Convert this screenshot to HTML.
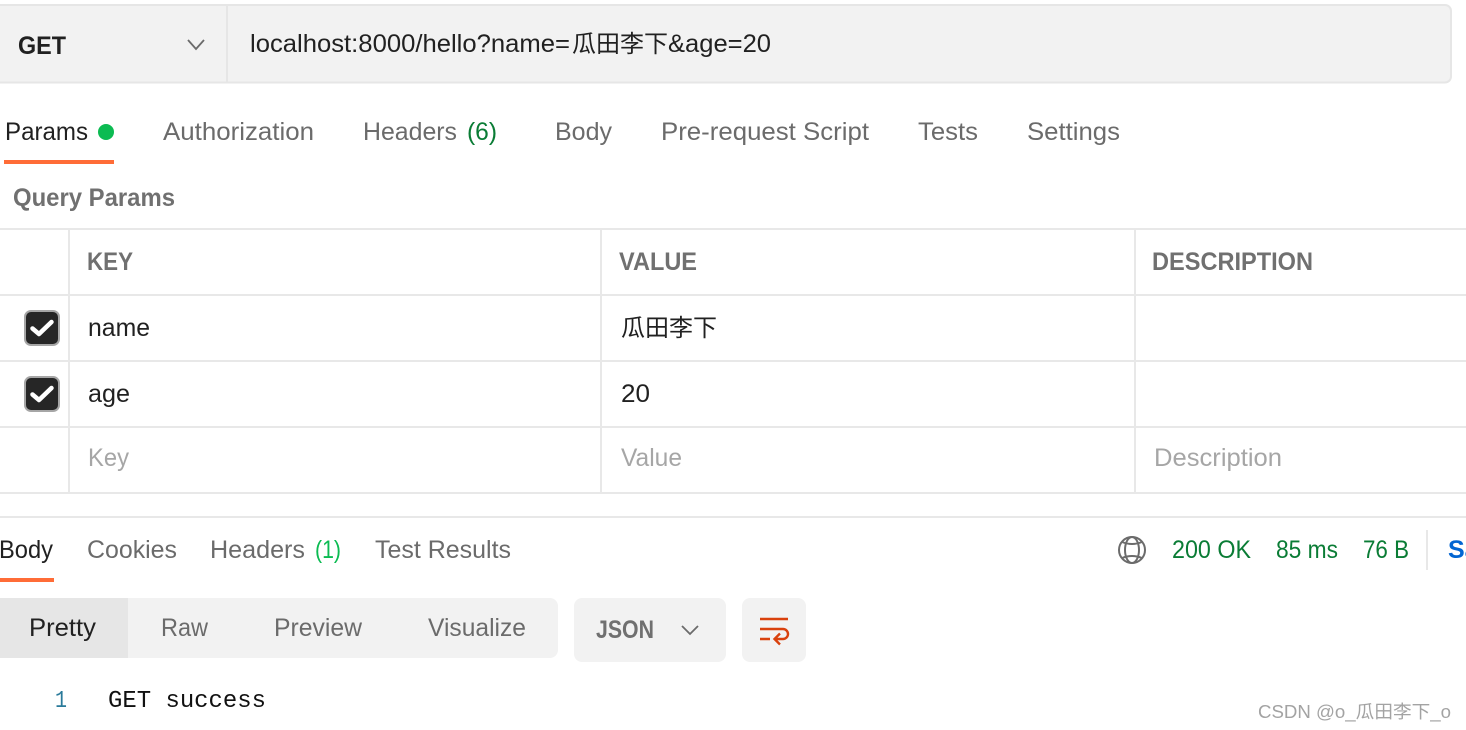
<!DOCTYPE html>
<html><head><meta charset="utf-8"><style>
html,body{margin:0;padding:0;background:#fff;width:1466px;height:730px;overflow:hidden}
svg{display:block}
text{font-family:"Liberation Sans","Noto Sans CJK SC",sans-serif;font-size:25px;fill:#6b6b6b}
.d{fill:#212121}.b{font-weight:bold}
.g{fill:#0a7c35}.p{fill:#a6a6a6}
.h{fill:#707070}
</style></head><body>
<svg width="1466" height="730" viewBox="0 0 1466 730" xmlns="http://www.w3.org/2000/svg">
<rect width="1466" height="730" fill="#fff"/>
<rect x="-8" y="5" width="1459" height="77.500" rx="6" fill="#f2f2f2" stroke="#e6e6e6" stroke-width="2"/>
<rect x="226" y="5" width="2" height="77" fill="#e6e6e6"/>
<text class="d b" x="18" y="54" textLength="48" lengthAdjust="spacingAndGlyphs">GET</text>
<path d="M188 40l8 9 8-9" fill="none" stroke="#6b6b6b" stroke-width="1.800"/>
<text class="d" x="250" y="52" textLength="320" lengthAdjust="spacingAndGlyphs">localhost:8000/hello?name=</text>
<text class="d" x="572" y="52" textLength="96" lengthAdjust="spacingAndGlyphs" style="font-size:24px">瓜田李下</text>
<text class="d" x="668" y="52" textLength="103" lengthAdjust="spacingAndGlyphs">&amp;age=20</text>

<text class="d" x="5" y="140" textLength="83" lengthAdjust="spacingAndGlyphs">Params</text>
<circle cx="106" cy="132" r="8" fill="#0cbb52"/>
<rect x="4" y="160" width="110" height="4" fill="#ff6c37"/>
<text x="163" y="140" textLength="151" lengthAdjust="spacingAndGlyphs">Authorization</text>
<text x="363" y="140" textLength="94" lengthAdjust="spacingAndGlyphs">Headers</text>
<text class="g" x="467" y="140" textLength="30" lengthAdjust="spacingAndGlyphs">(6)</text>
<text x="555" y="140" textLength="57" lengthAdjust="spacingAndGlyphs">Body</text>
<text x="661" y="140" textLength="208" lengthAdjust="spacingAndGlyphs">Pre-request Script</text>
<text x="918" y="140" textLength="60" lengthAdjust="spacingAndGlyphs">Tests</text>
<text x="1027" y="140" textLength="93" lengthAdjust="spacingAndGlyphs">Settings</text>
<text class="b h" x="13" y="206" textLength="162" lengthAdjust="spacingAndGlyphs">Query Params</text>

<g fill="#e8e8e8">
<rect x="0" y="228" width="1466" height="2"/>
<rect x="0" y="294" width="1466" height="2"/>
<rect x="0" y="360" width="1466" height="2"/>
<rect x="0" y="426" width="1466" height="2"/>
<rect x="0" y="492" width="1466" height="2"/>
<rect x="68" y="228" width="2" height="266"/>
<rect x="600" y="228" width="2" height="266"/>
<rect x="1134" y="228" width="2" height="266"/>
<rect x="0" y="516" width="1466" height="2"/>
</g>
<text class="b h" x="87" y="270" textLength="46" lengthAdjust="spacingAndGlyphs">KEY</text>
<text class="b h" x="619" y="270" textLength="78" lengthAdjust="spacingAndGlyphs">VALUE</text>
<text class="b h" x="1152" y="270" textLength="161" lengthAdjust="spacingAndGlyphs">DESCRIPTION</text>

<rect x="25" y="311" width="34" height="34" rx="6" fill="#262626" stroke="#a6a6a6" stroke-width="2"/>
<path d="M32.500 328.500l6.500 5.500 12.500-12" fill="none" stroke="#fff" stroke-width="4.500" stroke-linecap="round" stroke-linejoin="round"/>
<rect x="25" y="377" width="34" height="34" rx="6" fill="#262626" stroke="#a6a6a6" stroke-width="2"/>
<path d="M32.500 394.500l6.500 5.500 12.500-12" fill="none" stroke="#fff" stroke-width="4.500" stroke-linecap="round" stroke-linejoin="round"/>

<text class="d" x="88" y="336" textLength="62" lengthAdjust="spacingAndGlyphs">name</text>
<text class="d" x="621" y="336" textLength="96" lengthAdjust="spacingAndGlyphs" style="font-size:24px">瓜田李下</text>
<text class="d" x="88" y="402" textLength="42" lengthAdjust="spacingAndGlyphs">age</text>
<text class="d" x="621" y="402" textLength="29" lengthAdjust="spacingAndGlyphs">20</text>
<text class="p" x="88" y="466" textLength="41" lengthAdjust="spacingAndGlyphs">Key</text>
<text class="p" x="621" y="466" textLength="61" lengthAdjust="spacingAndGlyphs">Value</text>
<text class="p" x="1154" y="466" textLength="128" lengthAdjust="spacingAndGlyphs">Description</text>

<text class="d" x="-1" y="558" textLength="54" lengthAdjust="spacingAndGlyphs">Body</text>
<rect x="0" y="578" width="54" height="4" fill="#ff6c37"/>
<text x="87" y="558" textLength="90" lengthAdjust="spacingAndGlyphs">Cookies</text>
<text x="210" y="558" textLength="95" lengthAdjust="spacingAndGlyphs">Headers</text>
<text x="315" y="558" textLength="26" lengthAdjust="spacingAndGlyphs" style="fill:#0cbb52">(1)</text>
<text x="375" y="558" textLength="136" lengthAdjust="spacingAndGlyphs">Test Results</text>

<g fill="none" stroke="#6b6b6b" stroke-width="2">
<circle cx="1132" cy="550" r="13"/>
<ellipse cx="1132" cy="550" rx="7" ry="13"/>
<path d="M1122 542q10 4 20 0M1122 558q10-4 20 0"/>
</g>
<text class="g" x="1172" y="558" textLength="79" lengthAdjust="spacingAndGlyphs">200 OK</text>
<text class="g" x="1276" y="558" textLength="62" lengthAdjust="spacingAndGlyphs">85 ms</text>
<text class="g" x="1363" y="558" textLength="46" lengthAdjust="spacingAndGlyphs">76 B</text>
<rect x="1426" y="530" width="2" height="40" fill="#e8e8e8"/>
<text class="b" x="1448" y="558" style="fill:#0265d2">Save</text>

<rect x="-10" y="598" width="568" height="60" rx="8" fill="#f2f2f2"/>
<path d="M0 598h128v60H0z" fill="#e6e6e6"/>
<text class="d" x="29" y="636" textLength="67" lengthAdjust="spacingAndGlyphs">Pretty</text>
<text x="161" y="636" textLength="47" lengthAdjust="spacingAndGlyphs">Raw</text>
<text x="274" y="636" textLength="88" lengthAdjust="spacingAndGlyphs">Preview</text>
<text x="428" y="636" textLength="98" lengthAdjust="spacingAndGlyphs">Visualize</text>

<rect x="574" y="598" width="152" height="64" rx="8" fill="#f2f2f2"/>
<text class="b h" x="596" y="638" textLength="58" lengthAdjust="spacingAndGlyphs">JSON</text>
<path d="M682 626l8 8 8-8" fill="none" stroke="#6b6b6b" stroke-width="1.800"/>
<rect x="742" y="598" width="64" height="64" rx="8" fill="#f2f2f2"/>
<path d="M760 619h28M760 629h23a5 5 0 0 1 0 10h-8M760 639h10M780 633.500l-5.500 5.500 5.500 5.500" fill="none" stroke="#d9410d" stroke-width="2.400"/>

<text x="55" y="707" textLength="12" lengthAdjust="spacingAndGlyphs" style="font-family:'Liberation Mono',monospace;font-size:24px;fill:#2a7a9a">1</text>
<text x="108" y="707" textLength="158" lengthAdjust="spacingAndGlyphs" style="font-family:'Liberation Mono',monospace;font-size:24px;fill:#111">GET success</text>
<text x="1258" y="718" textLength="193" lengthAdjust="spacingAndGlyphs" style="font-size:18px;fill:#a3a3a3">CSDN @o_瓜田李下_o</text>
</svg>
</body></html>
